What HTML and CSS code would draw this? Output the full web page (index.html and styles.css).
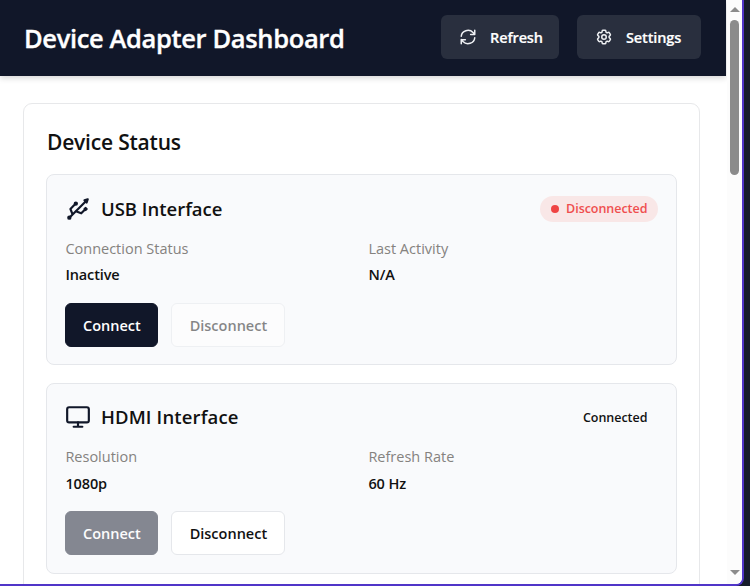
FILE: index.html
```html
<!DOCTYPE html>
<html lang="en">
<head>
<meta charset="utf-8">
<title>Device Adapter Dashboard</title>
<link rel="stylesheet" href="styles.css">
</head>
<body>
<div class="window">
  <div class="page">
    <header class="topbar">
      <h1 class="title">Device Adapter Dashboard</h1>
      <nav class="actions">
        <button class="action refresh"><svg class="icon" viewBox="0 0 24 24"><path d="M3 11a9 8.5 0 0 1 15.7-5L21 8.5M21 3v5.5h-5.5M21 13a9 8.5 0 0 1-15.7 5L3 15.500M8.500 15.500H3V21"/></svg><span>Refresh</span></button>
        <button class="action settings"><svg class="icon" viewBox="0 0 24 24"><path d="M9.594 3.940c.09-.542.560-.940 1.110-.940h2.593c.550 0 1.020.398 1.110.940l.213 1.281c.063.374.313.686.645.870.074.040.147.083.220.127.325.196.720.257 1.075.124l1.217-.456a1.125 1.125 0 0 1 1.370.490l1.296 2.247a1.125 1.125 0 0 1-.260 1.431l-1.003.827c-.293.241-.438.613-.430.992a7.723 7.723 0 0 1 0 .255c-.008.378.137.750.430.991l1.004.827c.424.350.534.955.260 1.430l-1.298 2.247a1.125 1.125 0 0 1-1.369.491l-1.217-.456c-.355-.133-.750-.072-1.076.124a6.470 6.470 0 0 1-.220.128c-.331.183-.581.495-.644.869l-.213 1.281c-.090.543-.560.940-1.110.940h-2.594c-.550 0-1.019-.398-1.110-.940l-.213-1.281c-.062-.374-.312-.686-.644-.870a6.520 6.520 0 0 1-.220-.127c-.325-.196-.720-.257-1.076-.124l-1.217.456a1.125 1.125 0 0 1-1.369-.490l-1.297-2.247a1.125 1.125 0 0 1 .260-1.431l1.004-.827c.292-.240.437-.613.430-.991a6.932 6.932 0 0 1 0-.255c.007-.380-.138-.751-.430-.992l-1.004-.827a1.125 1.125 0 0 1-.260-1.430l1.297-2.247a1.125 1.125 0 0 1 1.370-.491l1.216.456c.356.133.751.072 1.076-.124.072-.044.146-.086.220-.128.332-.183.582-.495.644-.869z"/><circle cx="12" cy="12" r="3"/></svg><span>Settings</span></button>
      </nav>
    </header>
    <main class="panel">
      <h2 class="heading">Device Status</h2>
      <section class="device">
        <div class="device-head">
          <svg class="device-icon" viewBox="0 0 24 24"><circle cx="10" cy="7" r="1"/><circle cx="4" cy="20" r="1"/><path d="M4.700 19.300 19 5M21 3l-3 1 2 2ZM9.260 7.680 5 12l2 5M10 14l5 2 3.500-3.500M18 12l1-1 1 1-1 1Z"/></svg>
          <h3 class="name usb">USB Interface</h3>
          <span class="badge off"><i class="dot"></i><span>Disconnected</span></span>
        </div>
        <dl class="facts">
          <div><dt>Connection Status</dt><dd>Inactive</dd></div>
          <div><dt>Last Activity</dt><dd>N/A</dd></div>
        </dl>
        <div class="buttons"><button class="btn primary">Connect</button><button class="btn outline" disabled>Disconnect</button></div>
      </section>
      <section class="device hdmi-device">
        <div class="device-head">
          <svg class="device-icon" viewBox="0 0 24 24"><rect x="2" y="3" width="20" height="14" rx="1.800"/><path d="M8 21h8M12 17v4"/></svg>
          <h3 class="name hdmi">HDMI Interface</h3>
          <span class="badge"><span>Connected</span></span>
        </div>
        <dl class="facts">
          <div><dt>Resolution</dt><dd>1080p</dd></div>
          <div><dt>Refresh Rate</dt><dd>60 Hz</dd></div>
        </dl>
        <div class="buttons"><button class="btn primary" disabled>Connect</button><button class="btn outline">Disconnect</button></div>
      </section>
    </main>
  </div>
  <div class="scrollbar"><i class="arrow up"></i><i class="thumb"></i><i class="arrow down"></i></div>
</div>
</body>
</html>
```
FILE: styles.css
```css
* { box-sizing: border-box; }
body { margin: 0; height: 586px; overflow: hidden; background: #161c2b; font-family: "Open Sans", "Noto Sans", sans-serif; color: #111; }
h1, h2, h3, dl, dd { margin: 0; }
button { font: inherit; }
.window { width: 744px; height: 586px; display: flex; overflow: hidden; background: #fff; border: solid #5035c8; border-width: 0 2px 2px 0; border-radius: 0 0 8px 0; }
.page { width: 727px; height: 584px; overflow: hidden; flex: none; }
.topbar { height: 76px; width: 726px; padding: 1px 25px 2px 24px; display: flex; align-items: center; justify-content: space-between; background: #111729; color: #fff; box-shadow: 0 2px 6px rgba(0, 0, 0, .17); }
.title { font-size: 25.5px; line-height: 36px; font-weight: 600; letter-spacing: -.36px; white-space: nowrap; -webkit-text-stroke: .35px currentColor; }
.actions { display: flex; gap: 18px; margin-top: -1px; }
.action { height: 44px; border: 0; border-radius: 6px; background: #292f3e; color: #fff; padding: 0 0 0 18px; display: flex; align-items: center; gap: 13px; font-size: 14.5px; font-weight: 600; letter-spacing: -.12px; -webkit-text-stroke: .2px currentColor; }
.refresh { width: 118px; }
.settings { width: 124px; }
.icon { width: 18px; height: 18px; fill: none; stroke: #eef0f3; stroke-width: 2; stroke-linecap: round; stroke-linejoin: round; flex: none; }
.panel { width: 677px; height: 620px; margin: 27px 0 0 23.4px; border: 1px solid #e7e8ea; border-radius: 9px; padding: 22px 22px 0; }
.heading { font-size: 21px; line-height: 34px; font-weight: 600; letter-spacing: -.2px; margin: -1px 0 15px; padding-left: .6px; }
.device { height: 191px; border: 1px solid #e5e7eb; border-radius: 8px; background: #f9fafc; padding: 18px; margin-bottom: 18px; }
.device + .device { padding-top: 17px; }
.device-head { height: 31px; display: flex; align-items: center; }
.device-icon { width: 26px; height: 26px; margin-right: 9.500px; fill: none; stroke: #111729; stroke-width: 2; stroke-linecap: round; stroke-linejoin: round; }
.name { font-size: 18.500px; font-weight: 600; line-height: 30px; white-space: nowrap; }
.hdmi { letter-spacing: .15px; }
.badge { margin-left: auto; height: 26px; border-radius: 13px; padding: 0 11px; display: flex; align-items: center; font-size: 12.500px; font-weight: 600; letter-spacing: -.04px; }
.off { background: #f9e7e7; color: #ef4e4e; gap: 7px; }
.hdmi-device .badge { padding-top: 2px; }
.dot { width: 8px; height: 8px; border-radius: 50%; background: #ef4444; }
.facts { display: grid; grid-template-columns: 303px 1fr; margin-top: 12px; }
.facts dt { font-size: 14.500px; line-height: 26px; color: #85827f; }
.facts dd { font-size: 14.500px; line-height: 26px; font-weight: 600; letter-spacing: -.12px; }
.hdmi-device dt { margin-bottom: 1px; }
.hdmi-device .buttons { margin-top: 14px; }
.buttons { display: flex; gap: 13px; margin-top: 15px; }
.btn { height: 44px; border-radius: 6px; border: 1px solid #e5e7eb; font-size: 14.500px; font-weight: 600; padding: 0; text-align: center; }
.primary { width: 93px; background: #111729; color: #fff; border-color: #111729; }
.outline { width: 114px; background: #fff; color: #111; }
.btn:disabled { opacity: .5; }
.scrollbar { width: 15px; height: 584px; background: #fcfcfc; display: flex; flex-direction: column; align-items: center; }
.arrow { width: 0; height: 0; border: solid transparent; border-width: 0 5px; }
.up { border-bottom: 5px solid #8b8b8b; margin-top: 7px; }
.thumb { width: 9px; height: 155px; margin-top: 8px; border-radius: 5px; background: #8b8b8b; }
.down { border-top: 5px solid #8b8b8b; margin: auto 0 9px; }
```
